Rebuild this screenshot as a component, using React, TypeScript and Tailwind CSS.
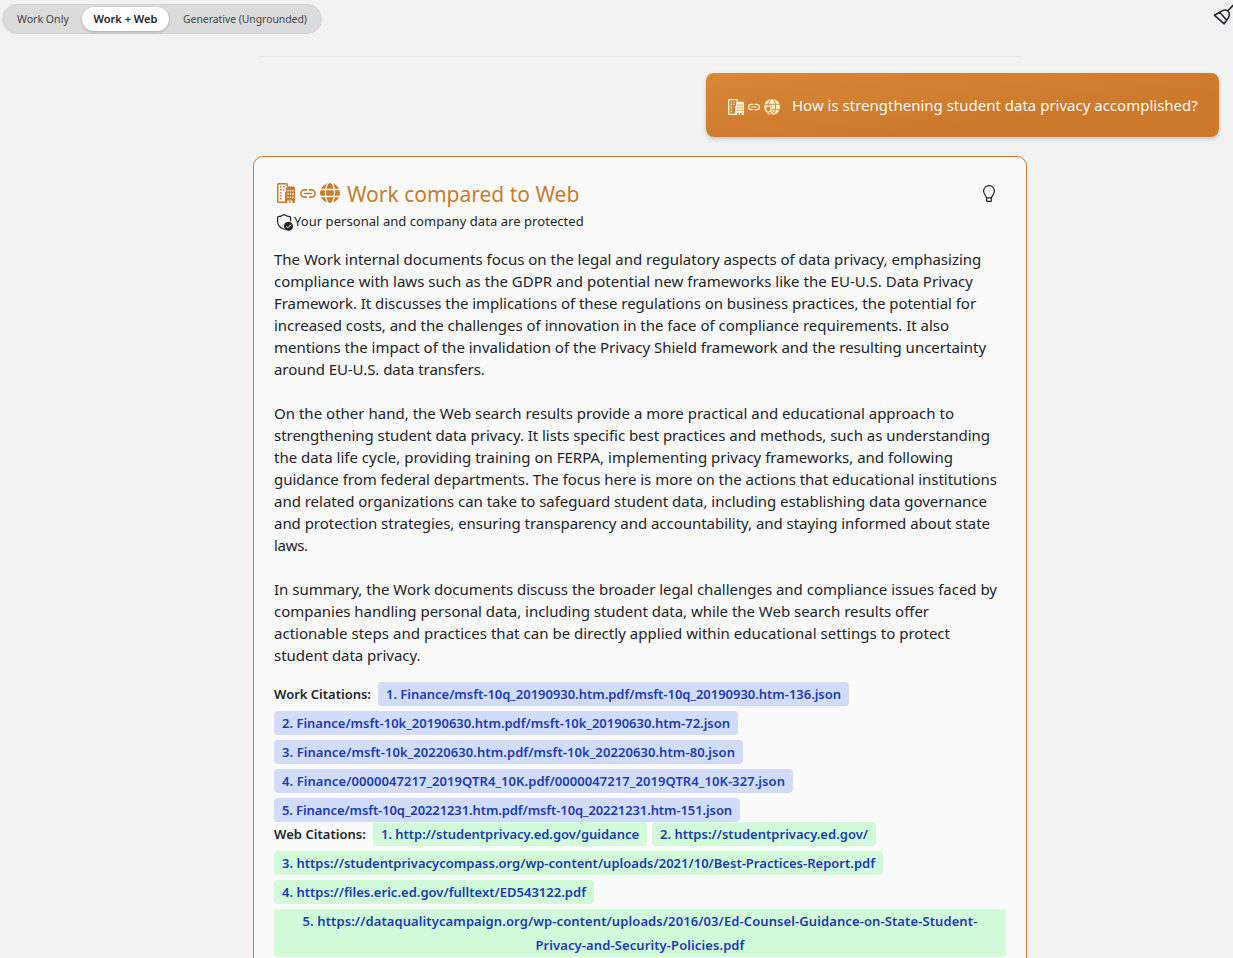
const BODY: { text: string; cls: string }[][] = [
  [
    { text: 'The Work internal documents focus on the legal and regulatory aspects of data privacy, emphasizing', cls: 'tracking-[0px]' },
    { text: 'compliance with laws such as the GDPR and potential new frameworks like the EU-U.S. Data Privacy', cls: 'tracking-[0.017px]' },
    { text: 'Framework. It discusses the implications of these regulations on business practices, the potential for', cls: 'tracking-[-0.041px]' },
    { text: 'increased costs, and the challenges of innovation in the face of compliance requirements. It also', cls: 'tracking-[-0.009px]' },
    { text: 'mentions the impact of the invalidation of the Privacy Shield framework and the resulting uncertainty', cls: 'tracking-[0px]' },
    { text: 'around EU-U.S. data transfers.', cls: 'tracking-[-0.06px]' },
  ],
  [
    { text: 'On the other hand, the Web search results provide a more practical and educational approach to', cls: 'tracking-[0.016px]' },
    { text: 'strengthening student data privacy. It lists specific best practices and methods, such as understanding', cls: 'tracking-[-0.039px]' },
    { text: 'the data life cycle, providing training on FERPA, implementing privacy frameworks, and following', cls: 'tracking-[0.01px]' },
    { text: 'guidance from federal departments. The focus here is more on the actions that educational institutions', cls: 'tracking-[-0.02px]' },
    { text: 'and related organizations can take to safeguard student data, including establishing data governance', cls: 'tracking-[-0.02px]' },
    { text: 'and protection strategies, ensuring transparency and accountability, and staying informed about state', cls: 'tracking-[-0.033px]' },
    { text: 'laws.', cls: 'tracking-[-0.3px]' },
  ],
  [
    { text: 'In summary, the Work documents discuss the broader legal challenges and compliance issues faced by', cls: 'tracking-[-0.009px]' },
    { text: 'companies handling personal data, including student data, while the Web search results offer', cls: 'tracking-[-0.026px]' },
    { text: 'actionable steps and practices that can be directly applied within educational settings to protect', cls: 'tracking-[0.028px]' },
    { text: 'student data privacy.', cls: 'tracking-[-0.03px]' },
  ],
];

const WORK = [
  { text: '1. Finance/msft-10q_20190930.htm.pdf/msft-10q_20190930.htm-136.json', cls: 'w-[471px] tracking-[-0.022px]' },
  { text: '2. Finance/msft-10k_20190630.htm.pdf/msft-10k_20190630.htm-72.json', cls: 'w-[464px] tracking-[0px]' },
  { text: '3. Finance/msft-10k_20220630.htm.pdf/msft-10k_20220630.htm-80.json', cls: 'w-[469px] tracking-[0.075px]' },
  { text: '4. Finance/0000047217_2019QTR4_10K.pdf/0000047217_2019QTR4_10K-327.json', cls: 'w-[519px] tracking-[0.074px]' },
  { text: '5. Finance/msft-10q_20221231.htm.pdf/msft-10q_20221231.htm-151.json', cls: 'w-[466px] tracking-[-0.097px]' },
];

const WEB = [
  { text: '1. http://studentprivacy.ed.gov/guidance', cls: 'w-[274px] tracking-[-0.034px]' },
  { text: '2. https://studentprivacy.ed.gov/', cls: 'w-[224px] tracking-[0.016px]' },
  { text: '3. https://studentprivacycompass.org/wp-content/uploads/2021/10/Best-Practices-Report.pdf', cls: 'w-[609px] tracking-[0.013px]' },
  { text: '4. https://files.eric.ed.gov/fulltext/ED543122.pdf', cls: 'w-[320px] tracking-[0.019px]' },
];

function Buildings({ className }: { className: string }) {
  return (
    <svg viewBox="0 0 18 20" preserveAspectRatio="none" className={className} fill="currentColor">
      <path d="M1.500 0h8a1.500 1.500 0 0 1 1.500 1.500V3H9.500V1.500h-8v17H8V20H.8a.8.8 0 0 1-.8-.8V1.500A1.500 1.500 0 0 1 1.500 0Z" />
      <path d="M3 3h1.500v1.500H3zM6 3h1.500v1.500H6zM3 6h1.500v1.500H3zM3 9h1.500v1.500H3zM3 12h1.500v1.500H3zM3 15h1.500v1.500H3zM6 6h1.500v1.500H6z" />
      <path fillRule="evenodd" d="M10.500 3.500h6A1.500 1.500 0 0 1 18 5v14.300a.7.7 0 0 1-.7.7h-2v-2.500h-5V20H8V9.500l1-.8V5a1.500 1.500 0 0 1 1.500-1.500ZM10.400 7v1.500h1.300V7zm2.500 0v1.500h1.300V7zm2.400 0v1.500h1.300V7zm-4.900 3.200v1.500h1.300v-1.500zm2.500 0v1.500h1.300v-1.500zm2.400 0v1.500h1.300v-1.500zm-4.900 3.200v1.500h1.300v-1.500zm2.500 0v1.500h1.300v-1.500zm2.400 0v1.500h1.300v-1.500z" />
      <path d="M12.200 17.500h1.300V20h-1.300z" />
    </svg>
  );
}

function Link({ className }: { className: string }) {
  return (
    <svg viewBox="0 0 16 9" className={className} fill="none" stroke="currentColor" strokeWidth="1.600" strokeLinecap="round">
      <path d="M6.500.9H4.400a3.600 3.600 0 0 0 0 7.200h2.100M9.500.9h2.100a3.600 3.600 0 0 1 0 7.200H9.500M4.600 4.500h6.800" />
    </svg>
  );
}

function Globe({ className, line }: { className: string; line: string }) {
  return (
    <svg viewBox="0 0 20 20" className={className}>
      <circle cx="10" cy="10" r="10" fill="currentColor" />
      <g fill="none" className={line} strokeWidth="1.300">
        <ellipse cx="10" cy="10" rx="4.500" ry="10.800" />
        <path d="M0 6.500h20M0 13.500h20" />
      </g>
    </svg>
  );
}

function GlobeSearch() {
  return (
    <svg viewBox="0 0 16 16" className="size-4">
      <circle cx="8" cy="8" r="8" fill="currentColor" />
      <g fill="none" className="stroke-[#d58536]" strokeWidth="0.900">
        <ellipse cx="8" cy="8" rx="3.600" ry="8.700" />
        <path d="M0 5.300h16M0 10.700h16" />
      </g>
      <circle cx="4.300" cy="10" r="4.100" className="fill-[#d58536]" />
      <path d="M6.500 12.400l3 3" className="stroke-[#d58536]" strokeWidth="3" />
      <circle cx="4.300" cy="10" r="2.900" fill="none" stroke="currentColor" strokeWidth="1.300" />
      <path d="M6.300 12l3 3" stroke="currentColor" strokeWidth="1.400" strokeLinecap="round" />
    </svg>
  );
}

function ShieldCheck() {
  return (
    <svg viewBox="0 0 16 17" className="mt-px h-[17px] w-4 shrink-0">
      <path d="M7.200 15.300C3 13.800.6 11.300.6 7.500V2.900C3 2.800 5.100 2.100 7.100.6c2 1.500 4.100 2.200 6.500 2.300v4" fill="none" stroke="#20262b" strokeWidth="1.200" strokeLinecap="round" strokeLinejoin="round" />
      <circle cx="11.500" cy="12.200" r="4.500" fill="#20262b" />
      <path d="M9.500 12.400l1.400 1.400 2.700-2.900" fill="none" stroke="#fafafa" strokeWidth="1" strokeLinecap="round" />
    </svg>
  );
}

export default function App() {
  return (
    <div className="flex h-[958px] w-full flex-col overflow-hidden bg-[#f2f2f2] font-['Noto_Sans',sans-serif] text-[15px] text-[#212529]">
      <header className="flex h-14 shrink-0 items-start justify-between">
        <div className="mt-1 ml-0.5 flex h-[30px] w-80 shrink-0 items-center rounded-full border border-[#d2d2d2] bg-[#dcdcdc] text-[10.400px] whitespace-nowrap text-[#424242]">
          <span className="mt-0.5 w-[79px] pl-3.5 text-[10.600px]">Work Only</span>
          <span className="flex h-6 w-[87px] items-center justify-center rounded-full bg-white text-[11px] font-semibold text-[#242424] shadow-[0_1px_3px_rgba(0,0,0,0.25)]">Work + Web</span>
          <span className="mt-0.5 ml-3.5 tracking-[-0.02px]">Generative (Ungrounded)</span>
        </div>
        <svg viewBox="0 0 22 26" className="h-[26px] w-[22px] shrink-0" fill="none" stroke="#242931" strokeWidth="1.600" strokeLinecap="round" strokeLinejoin="round">
          <path d="M23 4.500 17.500 10M3.500 15.300 9.500 11.600c2.500-1.600 5-2.600 7.300-.6 2.300 2.100 1.800 4.400.7 6.400l-4.300 6.400zM8.700 12.200l7 8" />
        </svg>
      </header>
      <div className="ml-[258px] h-px w-[764px] shrink-0 bg-[#e9e9e9]" />
      <div className="mt-4 mr-3.5 flex h-16 w-[513px] shrink-0 items-center self-end rounded-lg bg-linear-to-br from-[#d88838] to-[#cd792b] to-65% pl-[22px] whitespace-nowrap text-[#fff8f0] shadow-[0_2px_4px_rgba(0,0,0,0.18)]">
        <div className="mt-1 flex items-center gap-1 text-[#fff4d2]">
          <Buildings className="h-4 w-4" />
          <Link className="h-2 w-3" />
          <GlobeSearch />
        </div>
        <span className="ml-3">How is strengthening student data privacy accomplished?</span>
      </div>

      <main className="mt-[19px] ml-[253px] flex h-[900px] w-[774px] shrink-0 flex-col rounded-[10px] border border-[#cd7c2d] bg-[#fafafa] px-5 pt-5">
        <div className="flex h-[34px] shrink-0 items-center pl-[3px] text-[#cd7c2d]">
          <Buildings className="mt-[-2px] h-5 w-[18px]" />
          <Link className="mt-[-2px] ml-[5px] h-[9px] w-4" />
          <Globe className="mt-[-2px] ml-1 size-5" line="stroke-[#fafafa]" />
          <h1 className="ml-[7px] text-[21px] leading-[34px] whitespace-nowrap">Work compared to Web</h1>
          <svg viewBox="0 0 12 17" className="mr-[11px] mb-0.5 ml-auto h-[17px] w-3" fill="none" stroke="#1c2026" strokeWidth="1.200" strokeLinejoin="round">
            <path d="M3.600 12.800C3.200 10.600.6 9.200.6 5.900a5.400 5.300 0 0 1 10.800 0c0 3.300-2.600 4.700-3 6.900zM3.600 12.800v2.700c0 .5.4.9.9.9h3c.5 0 .9-.4.900-.9v-2.700" />
          </svg>
        </div>
        <div className="flex h-[22px] shrink-0 items-center pl-[3px] text-[13px] tracking-[0.05px] whitespace-nowrap">
          <ShieldCheck />
          <span className="ml-px">Your personal and company data are protected</span>
        </div>
        <div className="mt-[15px] flex shrink-0 flex-col gap-[22px] leading-[22px] whitespace-nowrap">
          {BODY.map((lines, i) => (
            <p key={i}>
              {lines.map((line) => (
                <span key={line.text} className={`block ${line.cls}`}>{line.text}</span>
              ))}
            </p>
          ))}
        </div>
        <div className="mt-4 flex shrink-0 flex-wrap items-center gap-x-[5px] gap-y-[5px] text-[13px] leading-6 font-semibold whitespace-nowrap">
          <span className="mr-0.5 w-[97px]">Work Citations:</span>
          {WORK.map((c) => (
            <a key={c.text} className={`h-6 rounded bg-[#d1dbfa] pl-2 text-[#1b3bb5] ${c.cls}`}>{c.text}</a>
          ))}
        </div>
        <div className="flex shrink-0 flex-wrap items-center gap-x-[5px] gap-y-[5px] text-[13px] leading-6 font-semibold whitespace-nowrap">
          <span className="mr-0.5 w-[92px] tracking-[0.04px]">Web Citations:</span>
          {WEB.map((c) => (
            <a key={c.text} className={`h-6 rounded bg-[#d1fbd9] pl-2 text-[#1b3bb5] ${c.cls}`}>{c.text}</a>
          ))}
          <a className="h-12 w-full rounded bg-[#d1fbd9] text-center tracking-[0.1px] text-[#1b3bb5]">
            5. https://dataqualitycampaign.org/wp-content/uploads/2016/03/Ed-Counsel-Guidance-on-State-Student-
            <br />
            Privacy-and-Security-Policies.pdf
          </a>
        </div>
      </main>
    </div>
  );
}
